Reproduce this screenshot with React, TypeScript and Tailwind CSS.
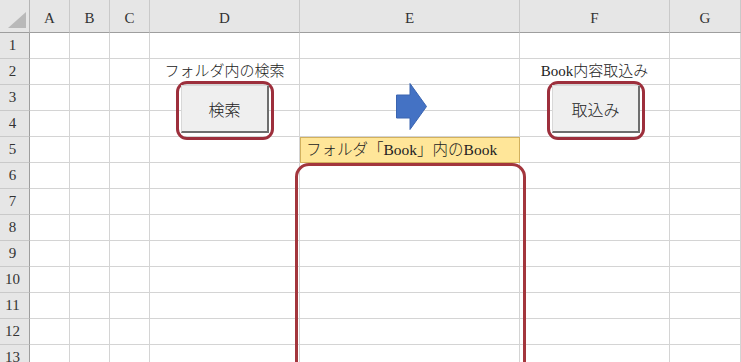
import React from 'react';

const COLS = ['A', 'B', 'C', 'D', 'E', 'F', 'G'];
const ROWS = Array.from({ length: 13 }, (_, i) => i + 1);

const sheetFont = { fontFamily: '"Liberation Serif", "Noto Sans CJK JP", serif' };

function Cell({ row, col }: { row: number; col: string }) {
  if (row === 2 && col === 'D') {
    return (
      <div className="flex items-center justify-center border-r border-b border-[#d4d4d4] pb-[1px] text-[15px] leading-none font-light text-[#222]">
        フォルダ内の検索
      </div>
    );
  }
  if (row === 2 && col === 'F') {
    return (
      <div className="flex items-center justify-center border-r border-b border-[#d4d4d4] pb-[1px] text-[15px] leading-none font-light text-[#222]">
        Book内容取込み
      </div>
    );
  }
  if (row === 5 && col === 'E') {
    return (
      <div className="flex items-center border border-[#d2b15e] bg-[#ffe699] pl-[5px] text-[15.5px] leading-none font-light text-[#222]">
        フォルダ「Book」内のBook
      </div>
    );
  }
  return <div className="border-r border-b border-[#d4d4d4]" />;
}

function SheetButton({ label, left }: { label: string; left: string }) {
  return (
    <div className={`absolute top-[81px] ${left} h-[59px] w-[98px] rounded-[11px] border-[3px] border-[#9d2f3c] pl-[2px] pt-[1px]`}>
      <div
        className="flex h-[48px] w-[88px] items-center justify-center border-t border-l border-[#d8d8d8] border-r-2 border-b-2 border-r-[#6e6e6e] border-b-[#6e6e6e] bg-[#efefef] text-[16px] font-light text-[#222]"
        style={{ fontFamily: '"Noto Sans CJK JP", sans-serif' }}
      >
        {label}
      </div>
    </div>
  );
}

export default function App() {
  return (
    <div className="relative h-[362px] w-[741px] overflow-hidden bg-white" style={sheetFont}>
      <div className="grid grid-cols-[30px_40px_40px_40px_150px_220px_150px_1fr] grid-rows-[33px_repeat(13,26px)]">
        {/* corner */}
        <div className="flex items-end justify-end border-r border-b border-r-[#b5b5b5] border-b-[#9e9e9e] bg-[#e6e6e6] pr-[3px] pb-[4px]">
          <svg width="18" height="16" viewBox="0 0 18 16">
            <polygon points="18,0 18,16 0,16" fill="#b9b9b9" />
          </svg>
        </div>
        {COLS.map((c) => (
          <div
            key={c}
            className="flex items-end justify-center border-r border-b border-r-[#c9c9c9] border-b-[#9e9e9e] bg-[#e6e6e6] pb-[6px] text-[15px] leading-none text-[#333]"
          >
            {c}
          </div>
        ))}
        {ROWS.map((r) => (
          <React.Fragment key={r}>
            <div className="flex items-center justify-center border-r border-b border-r-[#9e9e9e] border-b-[#c9c9c9] bg-[#e6e6e6] pr-[4px] text-[15px] leading-none text-[#333]">
              {r}
            </div>
            {COLS.map((c) => (
              <Cell key={c} row={r} col={c} />
            ))}
          </React.Fragment>
        ))}
      </div>

      <SheetButton label="検索" left="left-[176px]" />
      <SheetButton label="取込み" left="left-[547px]" />

      {/* right arrow */}
      <svg className="absolute left-[396px] top-[83px]" width="31" height="47" viewBox="0 0 31 47">
        <polygon points="0.5,12 14,12 14,0.5 30.5,23.5 14,46.5 14,35 0.5,35" fill="#4472c4" stroke="#3a64b0" strokeWidth="1" />
      </svg>

      {/* list frame */}
      <div className="absolute left-[295px] top-[163px] h-[240px] w-[231px] rounded-[14px] border-[3px] border-[#a3363d]" />
    </div>
  );
}
